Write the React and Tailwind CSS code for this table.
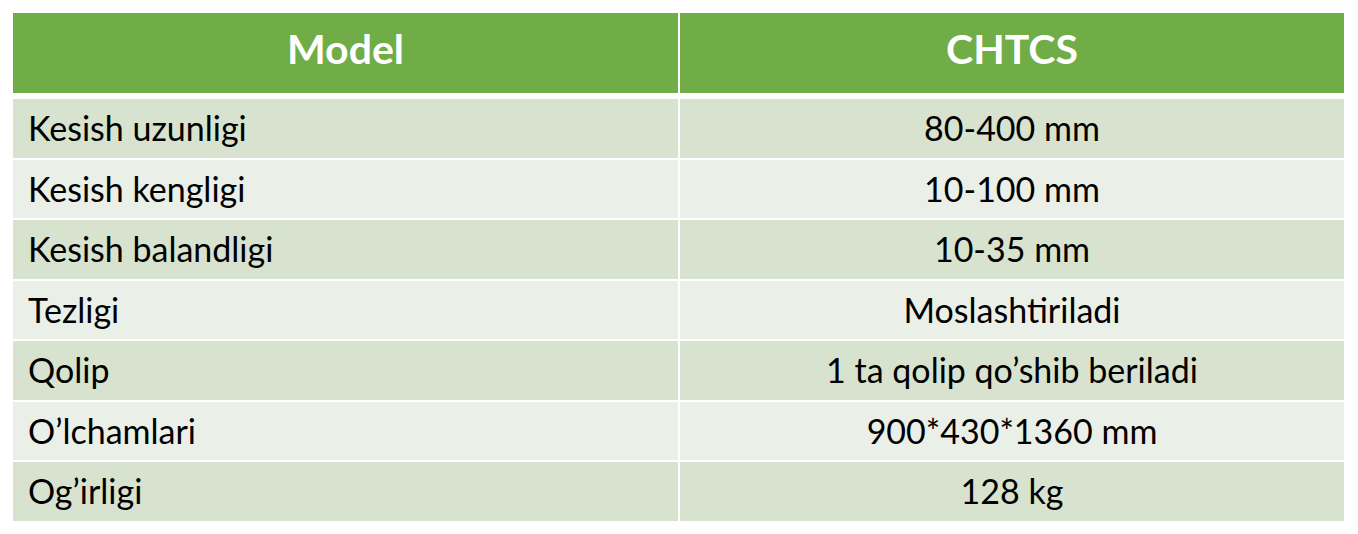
import React from 'react';

const rows = [
    ['Kesish uzunligi', '80-400 mm'],
    ['Kesish kengligi', '10-100 mm'],
    ['Kesish balandligi', '10-35 mm'],
    ['Tezligi', 'Moslashtiriladi'],
    ['Qolip', '1 ta qolip qo’shib beriladi'],
    ['O’lchamlari', '900*430*1360 mm'],
    ['Og’irligi', '128 kg'],
];

const App = () => {
    return (
        <div className="w-[1358px] h-[534px] bg-white pt-[13px] pl-[13px] font-['Lato','Open_Sans',sans-serif] text-black">
            <div className="w-[1331px] flex flex-col">
                <div className="grid grid-cols-[665px_664px] gap-x-[2px] h-[80px]">
                    <div className="bg-[#70ad47] flex items-center justify-center pb-[10px] text-white font-bold text-[41px] leading-none">Model</div>
                    <div className="bg-[#70ad47] flex items-center justify-center pb-[10px] text-white font-bold text-[41px] leading-none">CHTCS</div>
                </div>
                <div className="mt-[6px] flex flex-col gap-y-[2px]">
                    {rows.map(([label, value], i) => (
                        <div key={label} className="grid grid-cols-[665px_664px] gap-x-[2px] h-[58.5px]">
                            <div className={`${i % 2 === 0 ? 'bg-[#d7e3cf]' : 'bg-[#eaefe8]'} flex items-center pl-[15px] text-[34px] leading-none`}>
                                {label}
                            </div>
                            <div className={`${i % 2 === 0 ? 'bg-[#d7e3cf]' : 'bg-[#eaefe8]'} flex items-center justify-center text-[34px] leading-none`}>
                                {value}
                            </div>
                        </div>
                    ))}
                </div>
            </div>
        </div>
    );
};

export default App;
